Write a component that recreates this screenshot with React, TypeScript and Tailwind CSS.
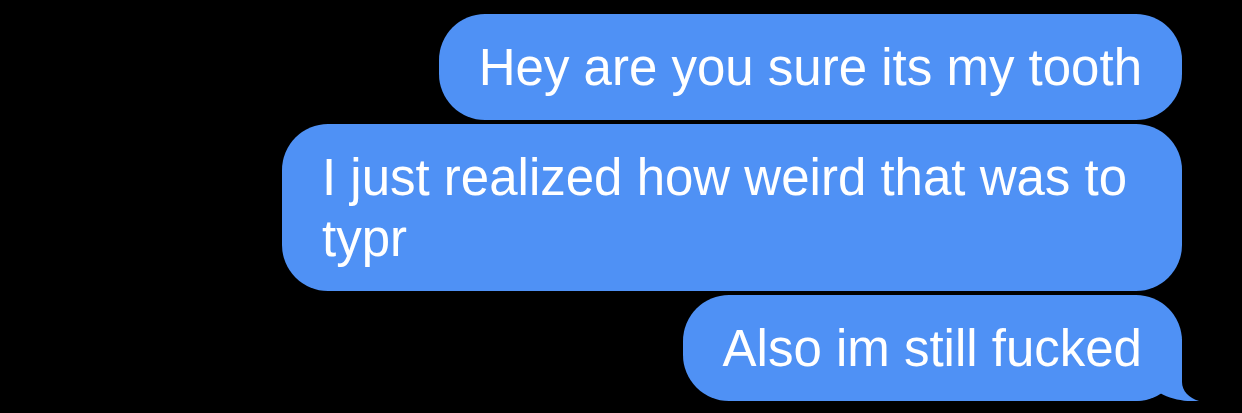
const messages = [
  'Hey are you sure its my tooth',
  'I just realized how weird that was to typr',
  'Also im still fucked',
];

const Tail = () => (
  <svg
    className="absolute right-[-18px] bottom-0"
    width="66"
    height="62"
    viewBox="0 0 66 62"
    fill="#4f91f5"
  >
    <path d="M0 0 H48 V43 C48 52 55 59 65 62 C54 63 38 61 26 54 C21 58 12 62 0 62 Z" />
  </svg>
);

export default function App() {
  return (
    <div className="w-[1242px] h-[413px] bg-black overflow-hidden">
      <div className="flex flex-col items-end gap-[4px] pt-[14px] pr-[60px]">
        {messages.map((text, i) => (
          <div
            key={i}
            className="relative max-w-[900px] rounded-[46px] bg-[#4f91f5] px-[40px] pt-[23px] pb-[22px] text-[51px] leading-[61px] text-white font-['Liberation_Sans',Arial,sans-serif]"
          >
            <span className="relative z-10">{text}</span>
            {i === messages.length - 1 && <Tail />}
          </div>
        ))}
      </div>
    </div>
  );
}
